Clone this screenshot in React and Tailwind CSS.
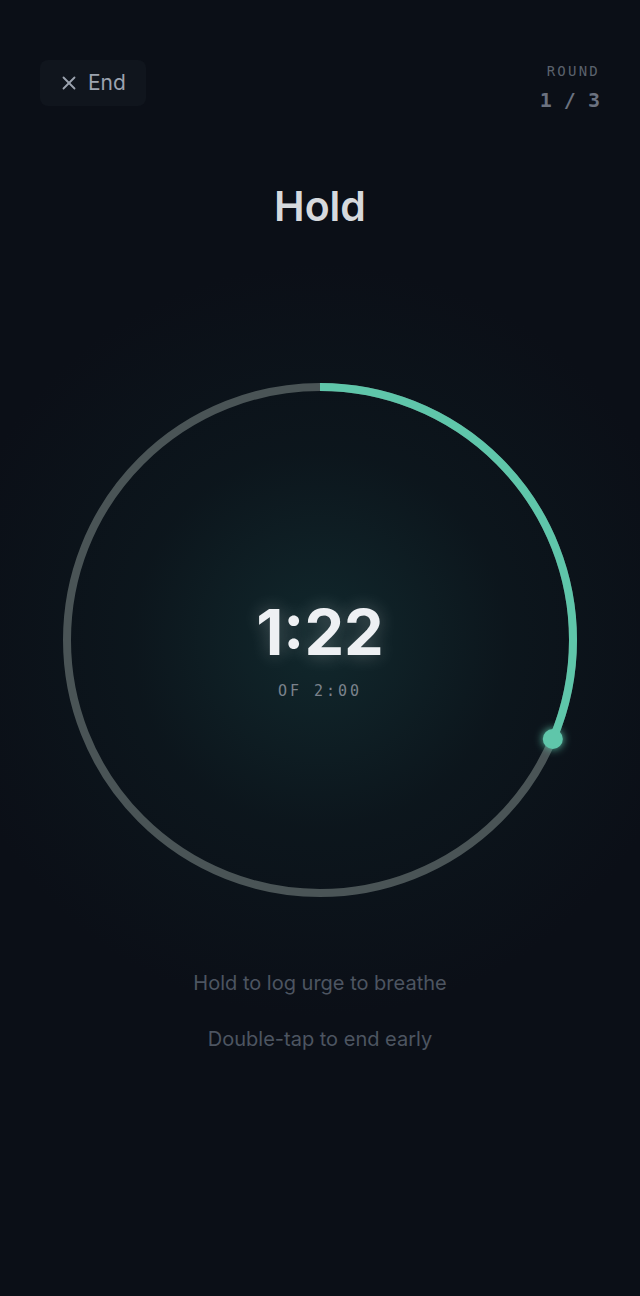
import React from 'react';
import { X } from 'lucide-react';

const R = 253;
const C = 2 * Math.PI * R;

export default function App() {
  const progress = 0.314; // elapsed share of the hold
  const angle = progress * 2 * Math.PI - Math.PI / 2;
  const dotX = 270 + R * Math.cos(angle);
  const dotY = 270 + R * Math.sin(angle);

  return (
    <div
      className="relative w-[640px] h-[1296px] overflow-hidden bg-[#0b0f17] text-white"
      style={{ fontFamily: 'Inter, "Noto Sans", sans-serif' }}
    >
      {/* soft glow behind the ring */}
      <div className="pointer-events-none absolute left-1/2 top-[640px] h-[760px] w-[760px] -translate-x-1/2 -translate-y-1/2 rounded-full bg-[radial-gradient(circle,_rgba(22,60,62,0.55)_0%,_rgba(14,34,38,0.35)_35%,_rgba(11,15,23,0)_70%)]" />

      <div className="relative flex flex-col items-center">
        <header className="flex w-full items-start justify-between px-10 pt-[60px]">
          <button className="flex h-[46px] items-center gap-2 rounded-lg bg-[#10151d] pl-[18px] pr-[20px] text-[21px] text-[#9ca3af]">
            <X size={22} strokeWidth={2} />
            <span>End</span>
          </button>
          <div
            className="flex flex-col items-end pt-[1px]"
            style={{ fontFamily: '"DejaVu Sans Mono", monospace' }}
          >
            <span className="text-[14px] tracking-[0.16em] text-[#5b626d]">ROUND</span>
            <span className="mt-[3px] text-[20px] font-bold text-[#6b7280]">1 / 3</span>
          </div>
        </header>

        <h1 className="mt-[71px] text-[41px] font-semibold leading-none text-[#d6d9dd]">Hold</h1>

        <div className="relative mt-[143px] h-[540px] w-[540px]">
          <svg width="540" height="540" viewBox="0 0 540 540" className="absolute inset-0">
            <defs>
              <filter id="glow" x="-50%" y="-50%" width="200%" height="200%">
                <feGaussianBlur stdDeviation="4" result="b" />
                <feMerge>
                  <feMergeNode in="b" />
                  <feMergeNode in="SourceGraphic" />
                </feMerge>
              </filter>
            </defs>
            <circle cx="270" cy="270" r={R} fill="none" stroke="#4a5456" strokeWidth="8" />
            <circle
              cx="270"
              cy="270"
              r={R}
              fill="none"
              stroke="#5fc6aa"
              strokeWidth="8"
              strokeDasharray={`${C * progress} ${C}`}
              transform="rotate(-90 270 270)"
            />
            <circle cx={dotX} cy={dotY} r="10" fill="#5fc6aa" filter="url(#glow)" />
          </svg>
          <div className="absolute inset-0 flex flex-col items-center justify-center">
            <span className="mt-[24px] text-[63px] font-bold leading-none text-[#eef0f3] [text-shadow:0_0_18px_rgba(255,255,255,0.25)]">
              1:22
            </span>
            <span
              className="mt-[16px] text-[15px] tracking-[0.2em] text-[#7b828c]"
              style={{ fontFamily: '"DejaVu Sans Mono", monospace' }}
            >
              OF 2:00
            </span>
          </div>
        </div>

        <p className="mt-[58px] text-[20px] text-[#4d5561]">Hold to log urge to breathe</p>
        <p className="mt-[26px] text-[20px] text-[#4d5561]">Double-tap to end early</p>
      </div>
    </div>
  );
}
